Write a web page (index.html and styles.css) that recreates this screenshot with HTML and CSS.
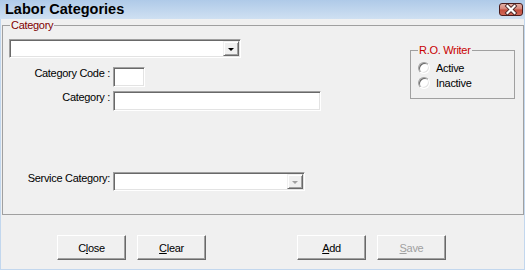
FILE: index.html
```html
<!DOCTYPE html>
<html>
<head>
    <meta charset="UTF-8">
    <title>Labor Categories</title>
    <link rel="stylesheet" href="styles.css">
</head>
<body>

<div class="m-win">
    <div class="u-title">
        <span class="u-caption">Labor Categories</span>
        <span class="u-close">
            <svg width="22" height="11" viewBox="0 0 22 11">
                <path d="M7.5 2 L14.5 9 M14.5 2 L7.5 9" stroke="#4d2a2a" stroke-width="4" stroke-linecap="square"/>
                <path d="M7.5 2 L14.5 9 M14.5 2 L7.5 9" stroke="#fff" stroke-width="2.2" stroke-linecap="square"/>
            </svg>
        </span>
    </div>
    <div class="u-client">
        <fieldset class="grp grp-main">
            <legend>Category</legend>
            <div class="grp-body">
                <div class="form">
                    <div class="combo combo-top">
                        <span class="combo-txt"></span>
                        <span class="combo-btn"><i class="tri"></i></span>
                    </div>
                    <div class="row row-code">
                        <label>Category Code :</label>
                        <input type="text" class="field f-code">
                    </div>
                    <div class="row row-cat">
                        <label>Category :</label>
                        <input type="text" class="field f-cat">
                    </div>
                    <div class="row row-svc">
                        <label>Service Category:</label>
                        <div class="combo combo-svc off">
                            <span class="combo-txt"></span>
                            <span class="combo-btn"><i class="tri"></i></span>
                        </div>
                    </div>
                </div>
                <fieldset class="grp grp-writer">
                    <legend>R.O. Writer</legend>
                    <label class="radio"><span class="dot"></span>Active</label>
                    <label class="radio"><span class="dot"></span>Inactive</label>
                </fieldset>
            </div>
        </fieldset>
        <div class="u-btns">
            <button class="btn b-close">C<u>l</u>ose</button>
            <button class="btn b-clear"><u>C</u>lear</button>
            <button class="btn b-add"><u>A</u>dd</button>
            <button class="btn b-save" disabled><u>S</u>ave</button>
        </div>
    </div>
</div>

</body>
</html>
```

FILE: styles.css
```css
*{ margin: 0; padding: 0; box-sizing: border-box;}
body {background: #f0f0f0; font-family: "Liberation Sans", Arial, sans-serif; font-size: 11px; letter-spacing: -0.3px; color: #000;}
.m-win {width: 525px; height: 270px; overflow: hidden; display: flex; flex-direction: column; background: #f0f0f0;}

/* title bar */
.u-title {height: 19px; flex: none; display: flex; justify-content: space-between; background: linear-gradient(to bottom, #afcae8, #cfe0f2);}
.u-caption {padding-left: 5px; font-size: 14.5px; font-weight: bold; line-height: 19px; letter-spacing: 0;}
.u-close {width: 24px; height: 13px; margin: 3px 2px 0 0; border: 1px solid #4a1c1c; border-radius: 3px; display: flex; align-items: center; justify-content: center;
    background: linear-gradient(to bottom, #e2b0a6 0%, #d98c80 40%, #c4503f 55%, #d2695a 100%);}

.u-client {flex: 1; display: flex; flex-direction: column; border-left: 1px solid #c2d7ee; border-right: 1px solid #c2d7ee; border-bottom: 1px solid #c2d7ee;}

/* group boxes */
.grp {border: 1px solid #a0a0a0; min-width: 0; padding: 0;}
.grp legend {margin-left: 7px; padding: 0 1px; line-height: 13px;}
.grp-main {margin-left: 1px; height: 196px;}
.grp-main > legend {color: #800000;}
.grp-body {display: flex; justify-content: space-between; align-items: flex-start;}
.grp-writer {width: 105px; height: 55px; margin: 12px 8px 0 0;}
.grp-writer > legend {color: #c80000;}

/* sunken fields */
.field, .combo {background: #fff; border: 1px solid; border-color: #a0a0a0 #fff #fff #a0a0a0; box-shadow: inset 1px 1px #696969, inset -1px -1px #e3e3e3; outline: none;}
.combo {display: flex; padding: 1px;}
.combo-txt {flex: 1;}
.combo-btn {width: 16px; flex: none; display: flex; align-items: center; justify-content: center; background: #f0f0f0; border: 1px solid; border-color: #f0f0f0 #696969 #696969 #f0f0f0; box-shadow: inset 1px 1px #fff, inset -1px -1px #a0a0a0;}
.tri {width: 0; height: 0; border-left: 3px solid transparent; border-right: 3px solid transparent; border-top: 3px solid #000; margin-top: 1px;}
.off .tri {border-top-color: #a0a0a0;}

.combo-top {width: 232px; height: 19px; margin: 7px 0 0 6px;}

.row {display: flex; align-items: flex-start; gap: 3px;}
.row label {width: 107px; text-align: right; line-height: 13px;}
.row-code {margin-top: 9px;}
.row-cat {margin-top: 4px;}
.row-svc {margin-top: 61px;}
.f-code {width: 32px; height: 20px;}
.f-cat {width: 208px; height: 20px;}
.combo-svc {width: 192px; height: 19px;}

/* radios */
.radio {display: flex; align-items: center; height: 15px; margin-top: 3px;}
.radio + .radio {margin-top: 0;}
.dot {width: 12px; height: 12px; margin: 0 6px 0 7px; border-radius: 50%; background: #fff; border: 1px solid; border-color: #a0a0a0 #fff #fff #a0a0a0; box-shadow: inset 1px 1px #696969, inset -1px -1px #e3e3e3;}

/* buttons */
.u-btns {display: flex; margin: 20px 0 0 56px;}
.btn {width: 69px; height: 25px; font: inherit; letter-spacing: inherit; color: #000; background: #f0f0f0; border: 1px solid; border-color: #fff #696969 #696969 #fff; box-shadow: inset -1px -1px #a0a0a0;}
.btn u {text-decoration: underline; text-underline-offset: 1px;}
.b-clear, .b-save {margin-left: 11px;}
.b-add {margin-left: 91px;}
.btn:disabled {color: #a0a0a0;}
```
